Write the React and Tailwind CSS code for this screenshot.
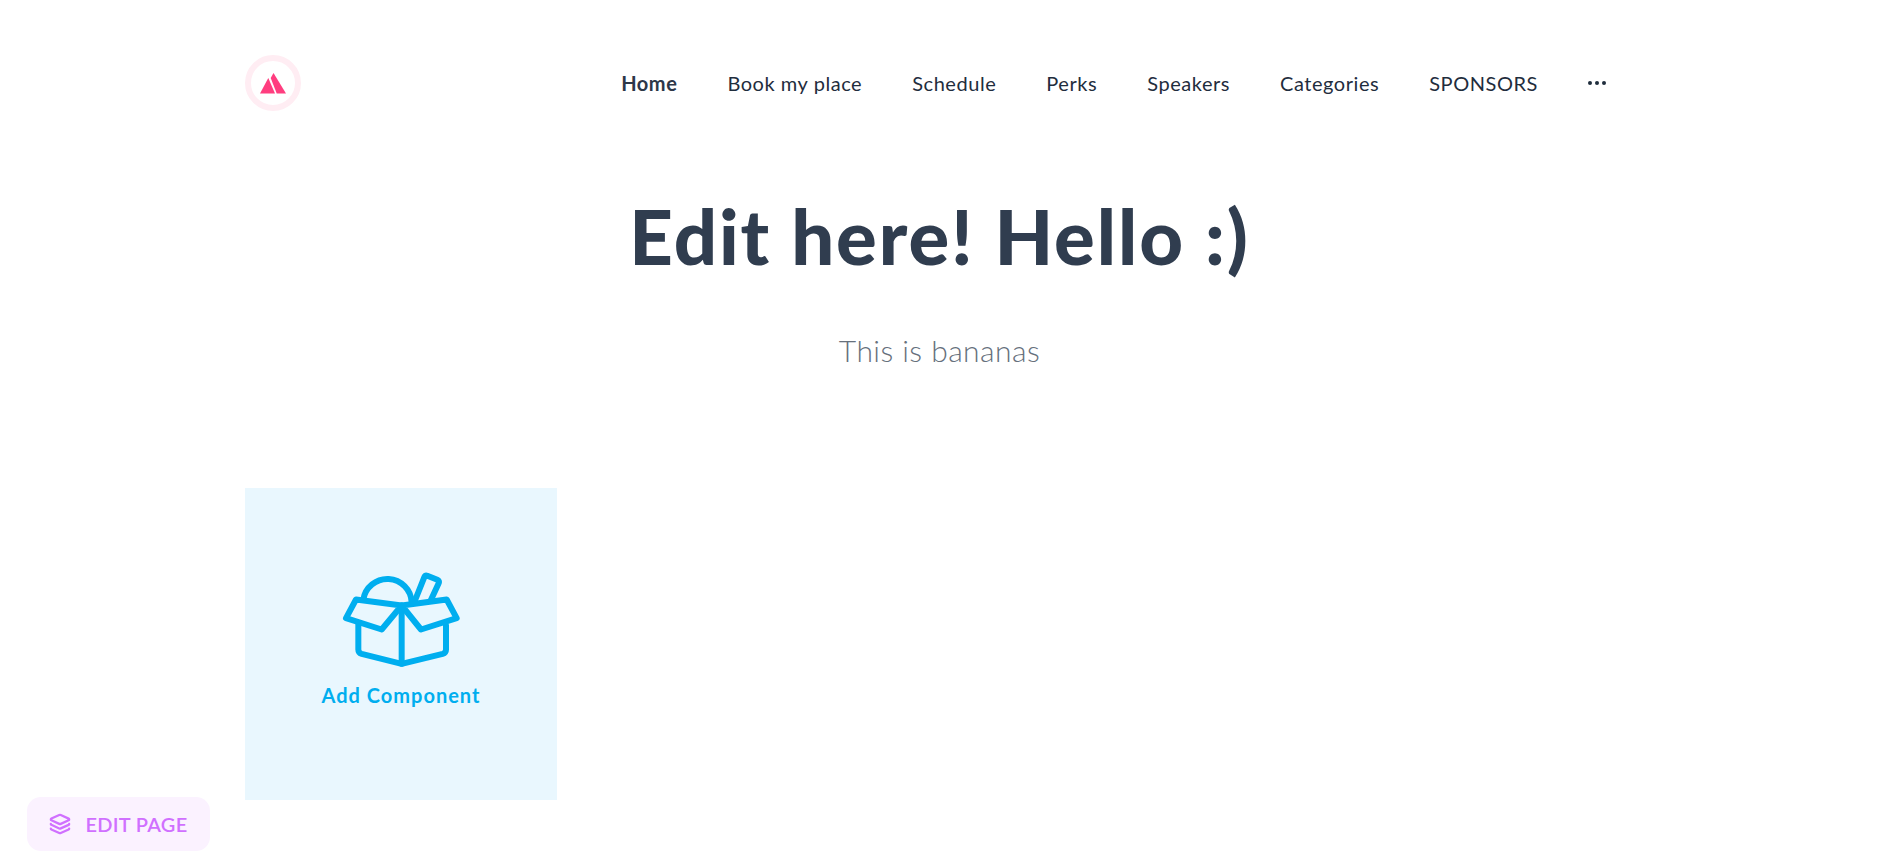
import React from 'react';
import { Layers } from 'lucide-react';

const navItems = ['Book my place', 'Schedule', 'Perks', 'Speakers', 'Categories', 'SPONSORS'];

const Logo = () => (
  <div className="w-[56px] h-[56px] rounded-full border-[6px] border-[#ffedf3] flex items-center justify-center">
    <svg width="26" height="21" viewBox="0 0 26 21">
      <path d="M0 20.5 L8.3 5 L15 20.5 Z" fill="#ff3d7f" />
      <path d="M10.7 5 L13.5 0 L26 20.5 L16.7 20.5 Z" fill="#ff3d7f" />
    </svg>
  </div>
);

const BoxIcon = () => (
  <svg width="120" height="97" viewBox="66 40 360 290" fill="none" stroke="#00aeef" strokeWidth="18" strokeLinecap="round" strokeLinejoin="round" className="ml-[2px]">
    <path d="M115 195 V272 Q115 282 125 285 L245 315 L368 285 Q378 282 378 272 V200" />
    <path d="M245 140 V315" />
    <path d="M245 140 L108 122 L78 178 L185 212 Z" />
    <path d="M245 140 L380 122 L410 178 L303 212 Z" />
    <path d="M130 122 A73 73 0 0 1 275 130" />
    <path d="M285 125 L313 55 Q316 49 322 51 L352 63 Q359 66 356 73 L332 125" />
  </svg>
);

export default function App() {
  return (
    <div className="min-h-[855px] bg-white font-['Lato',sans-serif] text-[#2d3748] px-[245px] relative">
      <header className="h-[166px] flex items-center justify-between pr-[28px]">
        <Logo />
        <nav className="flex items-center text-[20px] leading-[24px] tracking-[0.55px] text-[#1f2d3d] -mt-[1px]">
          <a className="font-bold mr-[50px] text-[#2d3748]">Home</a>
          {navItems.map((item) => (
            <a key={item} className="mr-[50px]">{item}</a>
          ))}
          <span className="flex gap-[3px] mt-[1px]">
            <i className="w-[4px] h-[4px] rounded-full bg-[#1f2d3d]" />
            <i className="w-[4px] h-[4px] rounded-full bg-[#1f2d3d]" />
            <i className="w-[4px] h-[4px] rounded-full bg-[#1f2d3d]" />
          </span>
        </nav>
      </header>

      <h1 className="text-center text-[76px] leading-[86px] font-black text-[#303d4f] tracking-[1.9px] mt-[27px]">Edit here! Hello :)</h1>
      <p className="text-center text-[30px] leading-[40px] font-light text-[#66707c] tracking-[0.45px] mt-[51px]">This is bananas</p>

      <div className="mt-[118px] w-[312px] h-[312px] bg-[#e9f7fe] flex flex-col items-center pt-[84px]">
        <BoxIcon />
        <span className="mt-[11px] text-[20px] font-bold tracking-[1px] text-[#00aeef]">Add Component</span>
      </div>

      <button className="fixed left-[27px] top-[797px] w-[183px] h-[54px] rounded-[14px] bg-[#fbf2ff] flex items-center justify-center gap-[14px] text-[20px] font-semibold tracking-[0.3px] text-[#d070ff]">
        <Layers size={22} strokeWidth={2.5} />
        EDIT PAGE
      </button>
    </div>
  );
}
